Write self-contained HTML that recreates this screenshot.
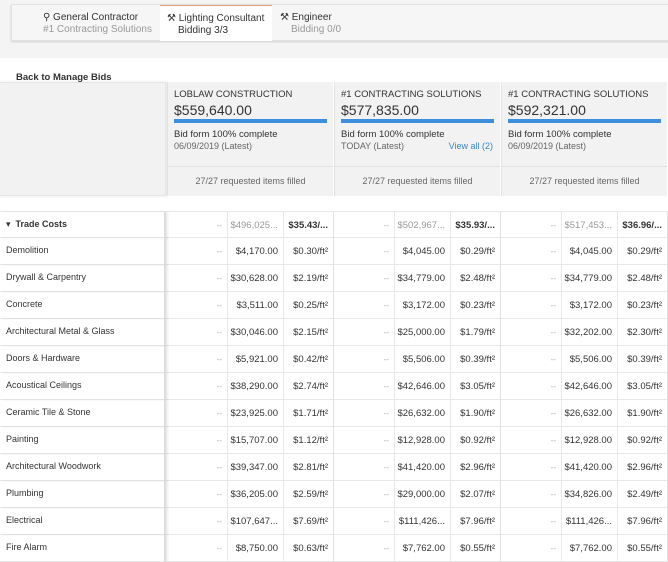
<!DOCTYPE html>
<html><head><style>
*{box-sizing:border-box;margin:0;padding:0}
body{width:668px;height:562px;overflow:hidden;background:#fff;font-family:"Liberation Sans",sans-serif;color:#333;position:relative}
.top{position:absolute;left:0;top:0;width:668px;height:58px;background:#f4f4f4}
.tabs{position:absolute;left:11px;top:4px;width:670px;height:37px;background:#f6f6f6;border:1px solid #e2e2e2;box-shadow:0 1px 2px rgba(0,0,0,.15)}
.tab{position:absolute;top:0;height:36px;font-size:10px;line-height:12px;padding-top:7px}
.tab .s{color:#999}
.act{background:#fff;border-top:1px solid #e8a27a;left:148px;width:112px;padding-left:7px}
.back{position:absolute;left:16px;top:72px;font-size:9.5px;font-weight:bold;color:#333}
.hdr{position:absolute;top:82px;height:114px;background:#f2f2f2;border:1px solid #e6e6e6}
.bid{position:absolute;top:82px;height:114px;width:166px;background:#f2f2f2;border-left:1px solid #e2e2e2}
.bid .n{position:absolute;left:6px;top:7px;font-size:9.5px;color:#333}
.bid .p{position:absolute;left:6px;top:20px;font-size:14px;color:#333}
.bid .bar{position:absolute;left:6px;top:37px;width:153px;height:4px;background:#3d8fde}
.bid .c{position:absolute;left:6px;top:47px;font-size:9.5px;color:#333}
.bid .d{position:absolute;left:6px;top:59px;font-size:9px;color:#666}
.bid .v{position:absolute;right:7px;top:59px;font-size:9px;color:#3d86c6}
.bid .f{position:absolute;left:0;top:84px;width:100%;height:30px;border-top:1px solid #e2e2e2;font-size:9px;color:#666;text-align:center;line-height:28px}
.row{position:absolute;left:0;width:668px;height:27px;border-bottom:1px solid #e8e8e8}
.lab{position:absolute;left:0;top:0;width:166px;height:27px;font-size:9px;line-height:24px;padding-left:6px;color:#333;border-right:2px solid #ddd;box-shadow:2px 0 2px rgba(0,0,0,.08)}
.cell{position:absolute;top:0;height:27px;font-size:9.5px;line-height:27px;text-align:right;padding-right:5px;border-right:1px solid #e8e8e8}
.dd{color:#aaa;font-size:8px}
</style></head><body>
<div class="top"></div>
<div class="tabs">
<div class="tab" style="left:26px;width:114px;text-align:right">&#9906; General Contractor&nbsp;&nbsp;&nbsp;&nbsp;&nbsp;<br><span class="s">#1 Contracting Solutions</span></div>
<div class="tab act">&#9874; Lighting Consultant<br><span style="padding-left:11px">Bidding 3/3</span></div>
<div class="tab" style="left:268px;width:90px">&#9874; Engineer<br><span class="s" style="padding-left:11px">Bidding 0/0</span></div>
</div>
<div class="back">Back to Manage Bids</div>
<div class="hdr" style="left:-2px;width:168px;box-shadow:2px 0 3px rgba(0,0,0,.1)"></div>
<div class="bid" style="left:167px"><div class="n">LOBLAW CONSTRUCTION</div><div class="p">$559,640.00</div><div class="bar"></div><div class="c">Bid form 100% complete</div><div class="d">06/09/2019 (Latest)</div><div class="f">27/27 requested items filled</div></div>
<div class="bid" style="left:334px"><div class="n">#1 CONTRACTING SOLUTIONS</div><div class="p">$577,835.00</div><div class="bar"></div><div class="c">Bid form 100% complete</div><div class="d">TODAY (Latest)</div><div class="v">View all (2)</div><div class="f">27/27 requested items filled</div></div>
<div class="bid" style="left:501px"><div class="n">#1 CONTRACTING SOLUTIONS</div><div class="p">$592,321.00</div><div class="bar"></div><div class="c">Bid form 100% complete</div><div class="d">06/09/2019 (Latest)</div><div class="f">27/27 requested items filled</div></div>
<div id="t"></div>
<script>
var rows=[["&#9662;&nbsp; <b>Trade Costs</b>","$496,025...","$35.43/...","$502,967...","$35.93/...","$517,453...","$36.96/..."],
["Demolition","$4,170.00","$0.30","$4,045.00","$0.29","$4,045.00","$0.29"],
["Drywall &amp; Carpentry","$30,628.00","$2.19","$34,779.00","$2.48","$34,779.00","$2.48"],
["Concrete","$3,511.00","$0.25","$3,172.00","$0.23","$3,172.00","$0.23"],
["Architectural Metal &amp; Glass","$30,046.00","$2.15","$25,000.00","$1.79","$32,202.00","$2.30"],
["Doors &amp; Hardware","$5,921.00","$0.42","$5,506.00","$0.39","$5,506.00","$0.39"],
["Acoustical Ceilings","$38,290.00","$2.74","$42,646.00","$3.05","$42,646.00","$3.05"],
["Ceramic Tile &amp; Stone","$23,925.00","$1.71","$26,632.00","$1.90","$26,632.00","$1.90"],
["Painting","$15,707.00","$1.12","$12,928.00","$0.92","$12,928.00","$0.92"],
["Architectural Woodwork","$39,347.00","$2.81","$41,420.00","$2.96","$41,420.00","$2.96"],
["Plumbing","$36,205.00","$2.59","$29,000.00","$2.07","$34,826.00","$2.49"],
["Electrical","$107,647...","$7.69","$111,426...","$7.96","$111,426...","$7.96"],
["Fire Alarm","$8,750.00","$0.63","$7,762.00","$0.55","$7,762.00","$0.55"]];
var h="",bx=[168,335,502];
rows.forEach(function(r,i){var y=211+i*27;h+='<div class="row" style="top:'+y+'px'+(i==0?';border-top:1px solid #e8e8e8':'')+'"><div class="lab">'+r[0]+'</div>';
for(var k=0;k<3;k++){var x=bx[k];var a=r[1+k*2],p=r[2+k*2];
h+='<div class="cell dd" style="left:'+x+'px;width:60px">--</div>';
h+='<div class="cell" style="left:'+(x+60)+'px;width:56px;'+(i==0?'color:#999':'')+'">'+a+'</div>';
h+='<div class="cell" style="left:'+(x+116)+'px;width:50px;border-right:1px solid #e2e2e2;'+(i==0?'font-weight:bold':'')+'">'+(i==0?p:p+'/ft&sup2;')+'</div>';}
h+='</div>';});
document.getElementById("t").innerHTML=h;
</script>
</body></html>
